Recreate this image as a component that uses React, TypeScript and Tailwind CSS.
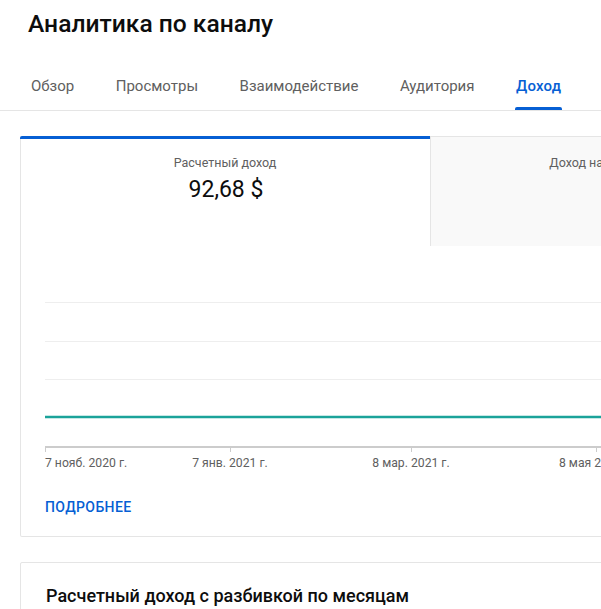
import React from "react";

const tabs = ["Обзор", "Просмотры", "Взаимодействие", "Аудитория", "Доход"];

const ticks = [0, 185, 366, 551];
const labels = ["7 нояб. 2020 г.", "7 янв. 2021 г.", "8 мар. 2021 г.", "8 мая 2021 г."];

export default function App() {
  return (
    <div
      className="w-[601px] h-[609px] overflow-hidden bg-white"
      style={{ fontFamily: "Roboto, 'Noto Sans', Arial, sans-serif" }}
    >
      <div className="pt-[8px] pl-[28px] text-[24.6px] leading-[32px] font-medium text-[#0d0d0d]">
        Аналитика по каналу
      </div>

      <div className="mt-[22px] h-[49px] border-b border-[#e5e5e5] flex pl-[31px] gap-[41.5px]">
        {tabs.map((t, i) => {
          const active = i === tabs.length - 1;
          return (
            <div
              key={t}
              className={
                "relative h-[48px] flex items-center text-[15px] whitespace-nowrap " +
                (active ? "text-[#065fd4] font-medium tracking-[0.2px]" : "text-[#606060]")
              }
            >
              {t}
              {active && (
                <span className="absolute left-[-1px] right-[-1px] bottom-0 h-[3px] bg-[#065fd4] rounded-t-[2px]" />
              )}
            </div>
          );
        })}
      </div>

      <div className="ml-[20px] mt-[25px] w-[900px] border-x border-b border-[#e5e5e5] rounded-[2px]">
        <div className="flex h-[110px]">
          <div className="w-[410px] -ml-px border-t-[3px] border-[#065fd4] rounded-tl-[2px] flex flex-col items-center pt-[15px]">
            <div className="text-[12.5px] leading-[18px] text-[#606060]">Расчетный доход</div>
            <div className="mt-[2px] translate-x-[1px] text-[23px] leading-[32px] text-[#0d0d0d]">92,68 $</div>
          </div>
          <div className="w-[388px] bg-[#f9f9f9] border-t border-l border-[#e5e5e5] flex flex-col items-center pt-[17px]">
            <div className="text-[12.5px] leading-[18px] text-[#606060] whitespace-nowrap">Доход на тысячу показов</div>
          </div>
          <div className="flex-1 bg-[#f9f9f9] border-t border-l border-[#e5e5e5]" />
        </div>

        <div className="pl-[24px] mt-[50px]">
          <svg width="600" height="156" className="block">
            <line x1="0" x2="600" y1="6.5" y2="6.5" stroke="#eeeeee" strokeWidth="1" />
            <line x1="0" x2="600" y1="45.5" y2="45.5" stroke="#eeeeee" strokeWidth="1" />
            <line x1="0" x2="600" y1="83.5" y2="83.5" stroke="#eeeeee" strokeWidth="1" />
            <line x1="0" x2="600" y1="121" y2="121" stroke="#1ba39a" strokeWidth="2.5" />
            <line x1="0" x2="600" y1="151" y2="151" stroke="#cccccc" strokeWidth="2" />
            {ticks.map((x) => (
              <line key={x} x1={x + 0.5} x2={x + 0.5} y1="150" y2="156" stroke="#cccccc" strokeWidth="1" />
            ))}
          </svg>
          <div className="relative h-[16px] mt-[3px] text-[12.2px] leading-[16px] text-[#606060]">
            {labels.map((l, i) => (
              <span
                key={l}
                className={
                  "absolute top-0 whitespace-nowrap " + (i === 0 ? "" : "-translate-x-1/2")
                }
                style={{ left: ticks[i] }}
              >
                {l}
              </span>
            ))}
          </div>
          <div className="mt-[26px] pb-[19px] text-[14px] leading-[20px] font-medium text-[#065fd4] tracking-[0.4px]">
            ПОДРОБНЕЕ
          </div>
        </div>
      </div>

      <div className="ml-[20px] mt-[25px] w-[900px] h-[100px] border border-[#e5e5e5] rounded-[2px] pt-[21px] pl-[25px]">
        <div className="text-[18px] leading-[24px] font-medium text-[#0d0d0d]">
          Расчетный доход с разбивкой по месяцам
        </div>
      </div>
    </div>
  );
}
